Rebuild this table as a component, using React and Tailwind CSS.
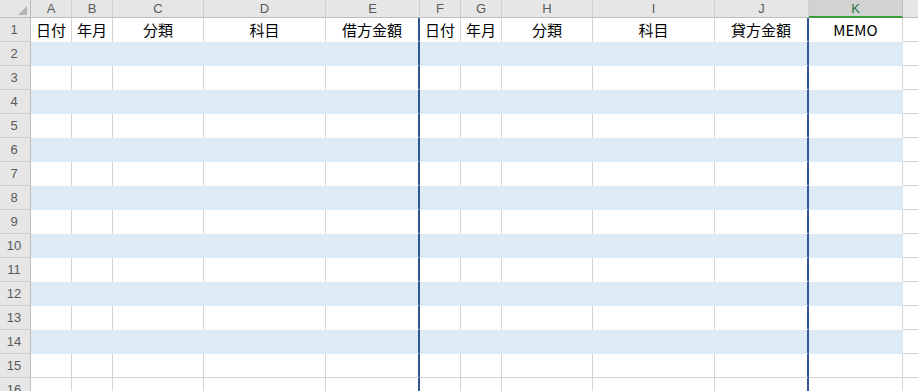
const COLS = [
  { key: 'A', w: 'w-[41px]', label: '日付' },
  { key: 'B', w: 'w-[41px]', label: '年月' },
  { key: 'C', w: 'w-[91px]', label: '分類' },
  { key: 'D', w: 'w-[122px]', label: '科目' },
  { key: 'E', w: 'w-[94px]', label: '借方金額', thick: true },
  { key: 'F', w: 'w-[41px]', label: '日付' },
  { key: 'G', w: 'w-[41px]', label: '年月' },
  { key: 'H', w: 'w-[91px]', label: '分類' },
  { key: 'I', w: 'w-[122px]', label: '科目' },
  { key: 'J', w: 'w-[94px]', label: '貸方金額', thick: true },
  { key: 'K', w: 'w-[94px]', label: 'MEMO', selected: true },
]

const ROWS = Array.from({ length: 16 }, (_, i) => i + 1)
const isBand = (n) => n >= 2 && n <= 14 && n % 2 === 0

function HeaderRow() {
  return (
    <div className="flex h-[18px] flex-none">
      <div className="w-[31px] flex-none flex justify-end items-end pr-[3px] pb-[2px] bg-[#e6e6e6] border-r border-r-[#bdbdbd] border-b border-b-[#bdbdbd]">
        <svg width="9" height="9" viewBox="0 0 9 9">
          <polygon points="9,0 9,9 0,9" fill="#b4b4b4" />
        </svg>
      </div>
      {COLS.map((c) => (
        <div
          key={c.key}
          className={
            c.selected
              ? `${c.w} flex-none flex items-center justify-center bg-[#d2d2d2] text-[#217346] border-r border-r-[#bdbdbd] border-b-2 border-b-[#3a9d3a]`
              : `${c.w} flex-none flex items-center justify-center bg-[#e6e6e6] text-[#5a5a5a] border-r border-r-[#cfcfcf] border-b border-b-[#bdbdbd]`
          }
        >
          {c.key}
        </div>
      ))}
      <div className="flex-1 bg-[#e6e6e6] border-b border-b-[#bdbdbd]" />
    </div>
  )
}

function DataRow({ n }) {
  const band = isBand(n)
  const nextWhite = !isBand(n + 1)
  const bottom = band ? 'border-b-[#ddebf7]' : nextWhite ? 'border-b-[#d4d4d4]' : 'border-b-[#ffffff]'
  return (
    <div className="flex h-[24px] flex-none">
      <div className="w-[31px] flex-none flex items-center justify-center pr-[2px] bg-[#e6e6e6] text-[#5a5a5a] border-r border-r-[#bdbdbd] border-b border-b-[#d0d0d0]">
        {n}
      </div>
      {COLS.map((c) => {
        let right = band ? 'border-r border-r-[#ddebf7]' : 'border-r border-r-[#d4d4d4]'
        if (c.thick) right = 'border-r-2 border-r-[#2f5597]'
        return (
          <div
            key={c.key}
            className={`${c.w} flex-none flex items-center justify-center border-b ${bottom} ${right} ${band ? 'bg-[#ddebf7]' : 'bg-white'} text-black text-[15px] font-['Noto_Sans_CJK_JP',sans-serif]`}
          >
            {n === 1 ? c.label : null}
          </div>
        )
      })}
      <div className="flex-1 bg-white border-b border-b-[#d4d4d4]" />
    </div>
  )
}

export default function App() {
  return (
    <div className="w-[918px] h-[391px] overflow-hidden bg-white flex flex-col text-[13px] leading-none font-['Liberation_Sans',Arial,sans-serif]">
      <HeaderRow />
      {ROWS.map((n) => (
        <DataRow key={n} n={n} />
      ))}
    </div>
  )
}
